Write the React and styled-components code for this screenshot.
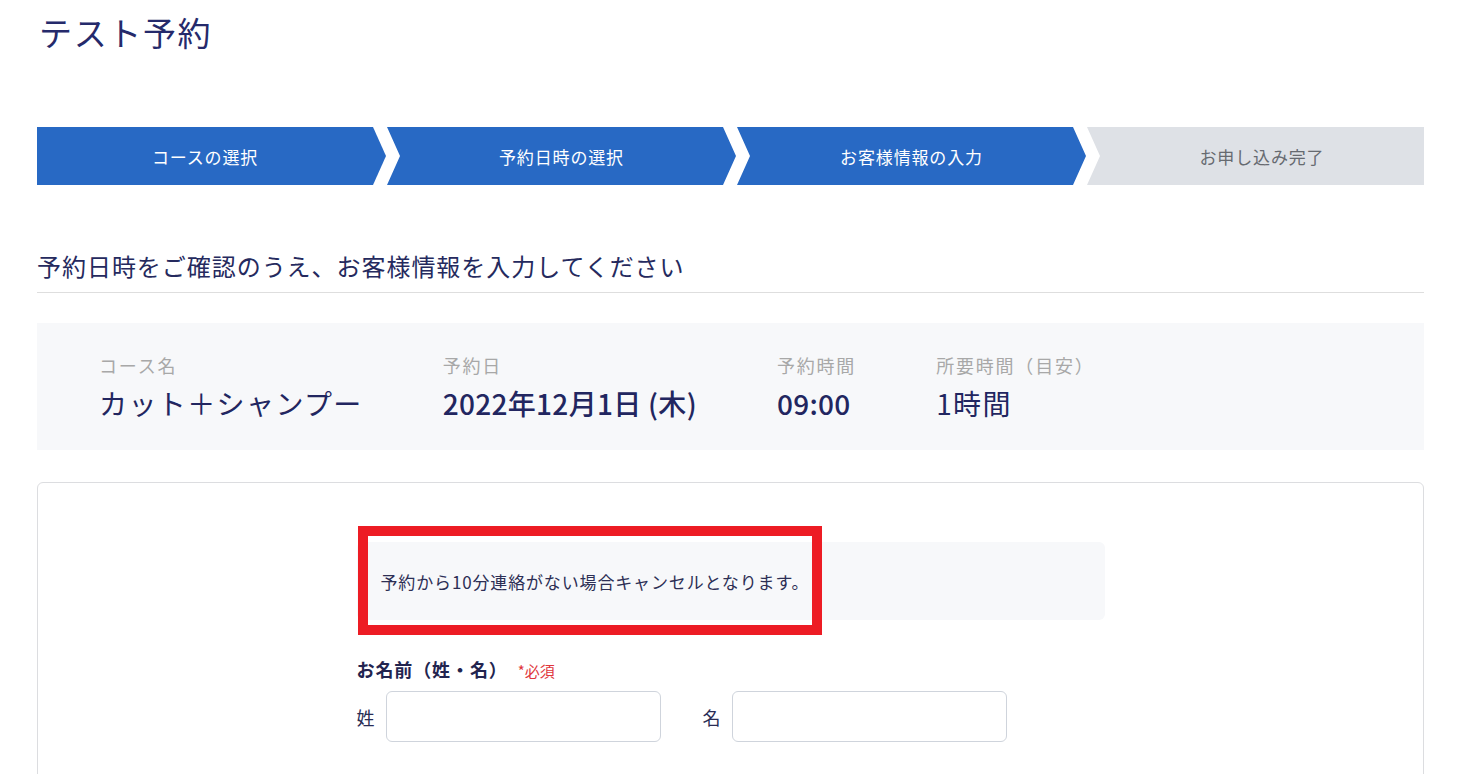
import styled, { createGlobalStyle } from "styled-components";

const GlobalStyle = createGlobalStyle`
  * { box-sizing: border-box; }
  body {
    margin: 0;
    background: #fff;
    font-family: "Noto Sans CJK JP", "Noto Sans", sans-serif;
    color: #232a62;
  }
`;

const steps = [
  { label: "コースの選択", done: true },
  { label: "予約日時の選択", done: true },
  { label: "お客様情報の入力", done: true },
  { label: "お申し込み完了", done: false },
];

const summary = [
  { label: "コース名", value: "カット＋シャンプー", bold: false },
  { label: "予約日", value: "2022年12月1日 (木)", bold: true },
  { label: "予約時間", value: "09:00", bold: true },
  { label: "所要時間（目安）", value: "1時間", bold: false },
];

const App = () => {
  return (
    <Page>
      <GlobalStyle />
      <Title>テスト予約</Title>

      <Steps>
        {steps.map((s, i) => (
          <Step
            key={s.label}
            $done={s.done}
            $first={i === 0}
            $last={i === steps.length - 1}
          >
            {s.label}
          </Step>
        ))}
      </Steps>

      <Lead>予約日時をご確認のうえ、お客様情報を入力してください</Lead>

      <Summary>
        {summary.map((item) => (
          <SummaryItem key={item.label}>
            <SummaryLabel>{item.label}</SummaryLabel>
            <SummaryValue $bold={item.bold}>{item.value}</SummaryValue>
          </SummaryItem>
        ))}
      </Summary>

      <Card>
        <Form>
          <NoticeWrap>
            <Notice>予約から10分連絡がない場合キャンセルとなります。</Notice>
            <Highlight />
          </NoticeWrap>

          <FieldLabel>
            お名前（姓・名）<Required>*必須</Required>
          </FieldLabel>
          <NameRow>
            <NameField>
              <NameLabel>姓</NameLabel>
              <Input type="text" />
            </NameField>
            <NameField>
              <NameLabel>名</NameLabel>
              <Input type="text" />
            </NameField>
          </NameRow>
        </Form>
      </Card>
    </Page>
  );
};

export default App;

const Page = styled.div`
  padding: 8px 36px 0 37px;
`;

const Title = styled.h1`
  margin: 0;
  font-size: 33px;
  line-height: 48px;
  font-weight: 400;
  letter-spacing: 0.05em;
  padding-left: 2px;
  color: #252a6b;
`;

const Steps = styled.div`
  display: grid;
  grid-template-columns: 349px 349px 349px 1fr;
  column-gap: 1px;
  margin-top: 71px;
  height: 58px;
`;

const Step = styled.div`
  display: flex;
  align-items: center;
  justify-content: center;
  font-size: 17px;
  letter-spacing: 0.05em;
  background: ${({ $done }) => ($done ? "#2869c4" : "#dee1e6")};
  color: ${({ $done }) => ($done ? "#fff" : "#666a70")};
  padding-left: ${({ $first }) => ($first ? "0" : "13px")};
  padding-right: ${({ $last }) => ($last ? "0" : "13px")};
  clip-path: ${({ $first, $last }) =>
    $last
      ? "polygon(0 0, 100% 0, 100% 100%, 0 100%, 13px 50%)"
      : $first
      ? "polygon(0 0, calc(100% - 13px) 0, 100% 50%, calc(100% - 13px) 100%, 0 100%)"
      : "polygon(0 0, calc(100% - 13px) 0, 100% 50%, calc(100% - 13px) 100%, 0 100%, 13px 50%)"};
`;

const Lead = styled.h2`
  margin: 63px 0 0;
  padding-bottom: 8px;
  border-bottom: 1px solid #dedede;
  font-size: 24px;
  line-height: 36px;
  font-weight: 400;
  letter-spacing: 0.04em;
  color: #252a5e;
`;

const Summary = styled.div`
  display: flex;
  gap: 80px;
  margin-top: 30px;
  padding: 29px 62px 27px;
  background: #f7f8fa;
`;

const SummaryItem = styled.div`
  display: flex;
  flex-direction: column;
  gap: 5px;
`;

const SummaryLabel = styled.div`
  font-size: 18px;
  line-height: 27px;
  letter-spacing: 0.1em;
  color: #a8a8a8;
`;

const SummaryValue = styled.div`
  font-size: 28px;
  line-height: 39px;
  letter-spacing: ${({ $bold }) => ($bold ? "0.3px" : "0.05em")};
  font-weight: ${({ $bold }) => ($bold ? 500 : 400)};
  color: #222660;
`;

const Card = styled.div`
  margin-top: 32px;
  padding: 59px 0 80px;
  border: 1px solid #dcdde0;
  border-radius: 6px;
  display: flex;
  justify-content: center;
`;

const Form = styled.div`
  width: 748px;
`;

const NoticeWrap = styled.div`
  position: relative;
`;

const Notice = styled.div`
  display: flex;
  align-items: center;
  height: 78px;
  padding: 0 24px;
  background: #f7f8fa;
  border-radius: 6px;
  font-size: 17px;
  letter-spacing: 0.05em;
  color: #2d2f55;
`;

/* red annotation frame drawn over the notice */
const Highlight = styled.div`
  position: absolute;
  left: 1px;
  top: -16px;
  width: 464px;
  height: 109px;
  border: 10px solid #ed1c24;
  pointer-events: none;
`;

const FieldLabel = styled.div`
  margin-top: 37px;
  font-size: 18px;
  line-height: 24px;
  font-weight: 700;
  letter-spacing: 0.05em;
  color: #22244f;
  display: flex;
  align-items: baseline;
`;

const Required = styled.span`
  margin-left: 10px;
  font-size: 15px;
  font-weight: 400;
  letter-spacing: 0;
  color: #e0363c;
`;

const NameRow = styled.div`
  display: flex;
  gap: 42px;
  margin-top: 8px;
`;

const NameField = styled.label`
  display: flex;
  align-items: center;
  gap: 11px;
`;

const NameLabel = styled.span`
  font-size: 18px;
  color: #2a2d55;
`;

const Input = styled.input`
  width: 275px;
  height: 51px;
  border: 1px solid #cfd4dc;
  border-radius: 6px;
  padding: 0 12px;
  font-size: 16px;
  font-family: inherit;
  outline: none;
  background: #fff;
`;
